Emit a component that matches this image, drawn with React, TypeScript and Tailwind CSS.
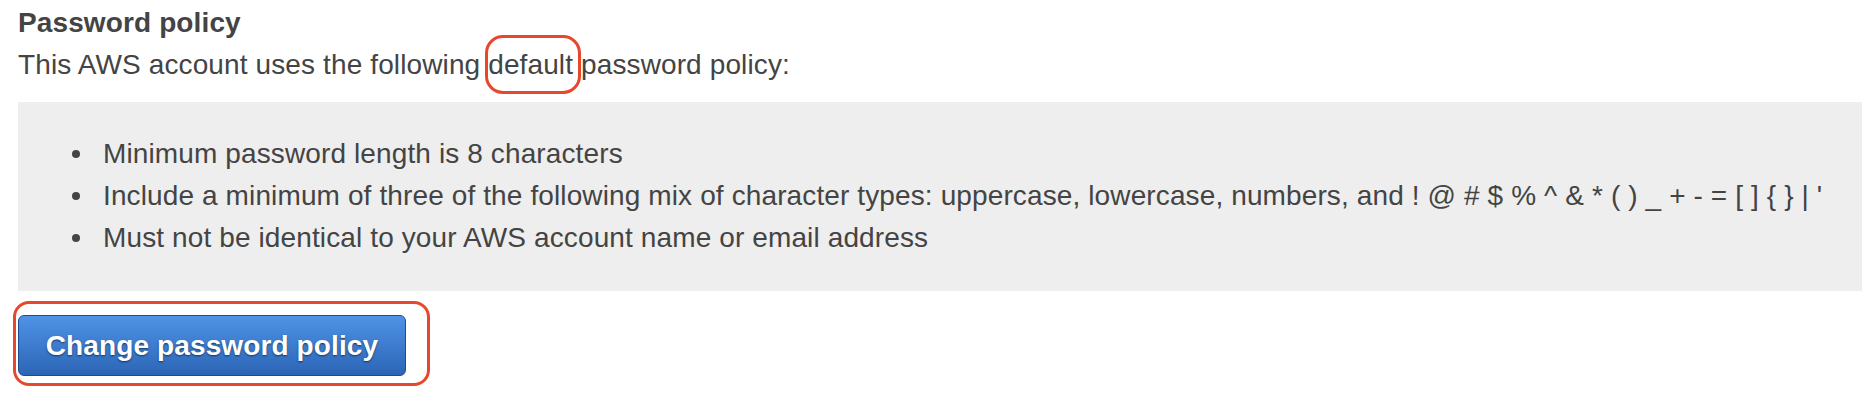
import React from "react";

const rules = [
  "Minimum password length is 8 characters",
  "Include a minimum of three of the following mix of character types: uppercase, lowercase, numbers, and ! @ # $ % ^ & * ( ) _ + - = [ ] { } | '",
  "Must not be identical to your AWS account name or email address",
];

// red marker drawn around a highlighted element
function Ring({ className }: { className: string }) {
  return (
    <span
      className={`pointer-events-none absolute border-[3.5px] border-[#e8472b] ${className}`}
    />
  );
}

export default function App() {
  return (
    <div className="w-[1862px] h-[400px] bg-white pl-[18px] pt-[2px] font-['Liberation_Sans',Arial,sans-serif] text-[28px] leading-[42px] tracking-[0.12px] text-[#444444]">
      <h2 className="font-bold">Password policy</h2>
      <p>
        This AWS account uses the following{" "}
        <span className="relative">
          default
          <Ring className="-top-[14px] -bottom-[14px] -left-[3px] -right-[8px] rounded-[18px]" />
        </span>{" "}
        password policy:
      </p>

      <div className="mt-[16px] bg-[#eeeeee] pt-[31px] pb-[32px]">
        <ul>
          {rules.map((rule) => (
            <li key={rule} className="flex items-center">
              <span className="ml-[54px] mr-[23px] h-[8px] w-[8px] rounded-full bg-[#444444]" />
              <span>{rule}</span>
            </li>
          ))}
        </ul>
      </div>

      <div className="relative mt-[24px] inline-block">
        <button className="h-[61px] w-[388px] rounded-[6px] border border-[#1d4c91] bg-gradient-to-b from-[#4f93e6] to-[#2c65b6] font-bold text-white [text-shadow:0_1px_2px_rgba(0,0,0,0.55)]">
          Change password policy
        </button>
        <Ring className="-top-[14px] -bottom-[10px] -left-[5px] -right-[24px] rounded-[16px]" />
      </div>
    </div>
  );
}
